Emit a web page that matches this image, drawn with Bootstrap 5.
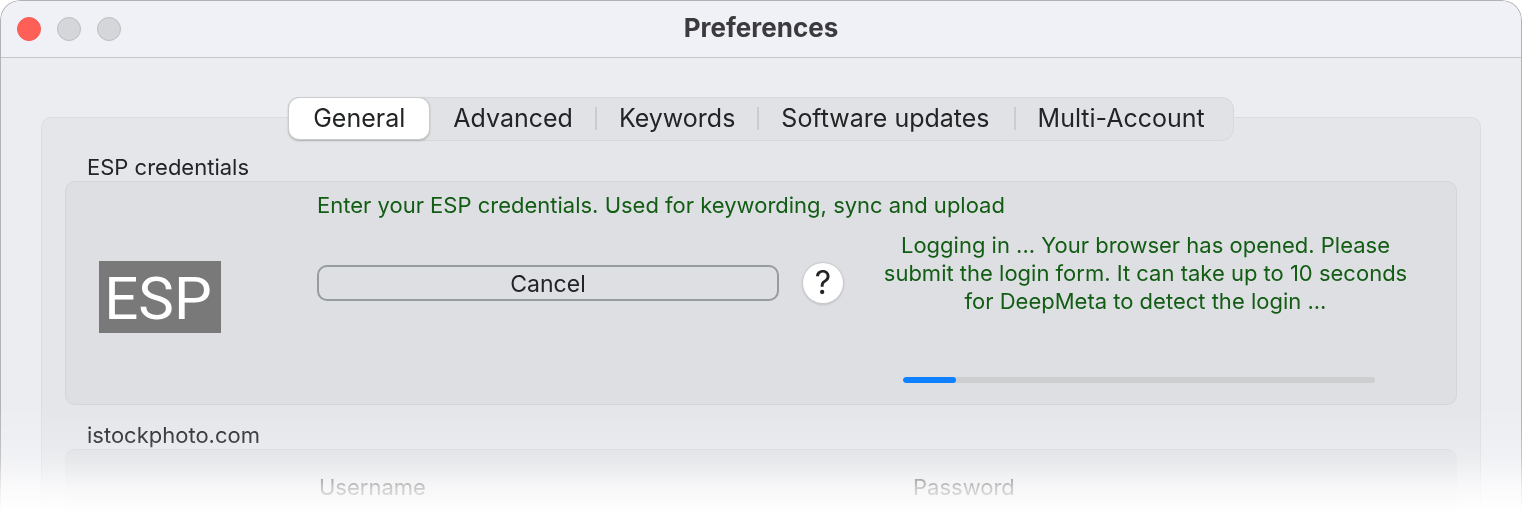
<!DOCTYPE html>
<html lang="en">
<head>
<meta charset="utf-8">
<meta name="viewport" content="width=device-width, initial-scale=1">
<title>Preferences</title>
<link rel="stylesheet" href="https://cdn.jsdelivr.net/npm/bootstrap@5.3.0/dist/css/bootstrap.min.css">
<style>
  body { font-family: Inter, "Liberation Sans", sans-serif; font-size: 22px; line-height: 28px; color: #222425; background: #fff; }
  .pref-window {
    background: #ecedf1; border: 1px solid #b2b2b4; border-bottom: 0; border-radius: 20px 20px 0 0;
    -webkit-mask-image: linear-gradient(to bottom, #000 405px, rgba(0,0,0,.86) 440px, rgba(0,0,0,.74) 458px, rgba(0,0,0,.26) 487px, transparent 512px);
    mask-image: linear-gradient(to bottom, #000 405px, rgba(0,0,0,.86) 440px, rgba(0,0,0,.74) 458px, rgba(0,0,0,.26) 487px, transparent 512px);
  }
  .title-bar { display: grid; grid-template-columns: 1fr auto 1fr; height: 57px; padding: 0 16px; background: #f0f1f6; border-bottom: 1px solid #c5c6ca; border-radius: 20px 20px 0 0; }
  .title-bar h1 { font-size: 26px; line-height: 52px; padding-bottom: 2px; font-weight: 700; color: #3b3b3d; }
  .light { width: 24px; height: 24px; padding: 0; border: 1px solid #bcbec0; border-radius: 50%; background: #d5d6da; }
  .light-close { background: #fe5f57; border-color: #f65b54; }
  .pref-body { padding: 39px 40px 0; }
  .tab-strip { height: 44px; padding-right: 4px; background: #e1e2e5; border: 1px solid #d7d8db; border-radius: 12px; }
  .tab-strip .nav-link { position: relative; height: 41px; padding: 0 22px 2px 24px; border: 0; border-radius: 10px; font-size: 25px; line-height: 38px; color: #222425; background: none; }
  .tab-strip .nav-link.active { padding-right: 24px; color: #222425; background: #fff; box-shadow: 0 0 0 1px #c9cccc, 0 1px 2px 1px rgba(0,0,0,.2); }
  .tab-strip .tab-wide { padding-right: 24px; }
  .divided::before { content: ""; position: absolute; left: 0; top: 9px; width: 2px; height: 23px; background: #cbccd0; }
  .tab-panel { margin-top: -24px; padding: 35px 23px 0; background: #e5e6ea; border: 1px solid #dbdce0; border-bottom: 0; border-radius: 10px 10px 0 0; height: 420px; }
  .group-title { font-size: 22px; line-height: 28px; padding-left: 22px; font-weight: 400; }
  .group-box { background: #dedfe3; border: 1px solid #d4d5d9; border-radius: 10px; }
  .esp-grid { display: grid; grid-template-columns: 194px minmax(0, 526fr) minmax(0, 557fr); column-gap: 24px; padding: 9px 32px 21px 33px; min-height: 224px; }
  .esp-logo { align-self: start; justify-self: start; margin-top: 70px; width: 122px; height: 72px; padding-right: 4px; text-align: center; font-family: Roboto, Inter, sans-serif; font-size: 60px; line-height: 76px; color: #fff; background: #797979; }
  .note { color: #125c14; }
  .hint { white-space: nowrap; }
  .action-row { gap: 24px; margin-top: 44px; }
  .btn-cancel { height: 36px; padding: 0; border: 2px solid #959c9b; border-radius: 10px; font-size: 23px; line-height: 34px; color: #222425; }
  .btn-help { width: 40px; height: 40px; padding: 0; border: 0; border-radius: 50%; background: #fff; box-shadow: 0 0 1px 1px #c9cbcd, 0 1px 2px 1px rgba(0,0,0,.12); font-size: 32px; line-height: 40px; color: #222425; }
  .login-note { margin-top: 40px; }
  .login-progress { height: 6px; margin: 62px 49px 0 36px; background: #cdced0; border-radius: 3px; --bs-progress-bar-bg: #0f80ff; }
  .login-progress .progress-bar { border-radius: 3px; }
  .stock-box { display: grid; grid-template-columns: 594fr 543fr; height: 90px; padding: 23px 1px 0 254px; border-width: 1px 0 0; }
</style>
</head>
<body>
<main class="pref-window">
  <header class="title-bar align-items-center">
    <div class="d-flex gap-3">
      <button class="light light-close" type="button" aria-label="Close"></button>
      <button class="light" type="button" aria-label="Minimize"></button>
      <button class="light" type="button" aria-label="Zoom"></button>
    </div>
    <h1 class="m-0">Preferences</h1>
  </header>
  <div class="pref-body">
    <div class="d-flex justify-content-center position-relative">
      <div class="tab-strip nav flex-nowrap" role="tablist">
        <button class="nav-link active" type="button" role="tab" aria-selected="true">General</button>
        <button class="nav-link" type="button" role="tab">Advanced</button>
        <button class="nav-link divided" type="button" role="tab">Keywords</button>
        <button class="nav-link divided tab-wide" type="button" role="tab">Software updates</button>
        <button class="nav-link divided tab-wide" type="button" role="tab">Multi-Account</button>
      </div>
    </div>
    <div class="tab-panel">
      <h2 class="group-title m-0">ESP credentials</h2>
      <section class="group-box esp-grid">
        <div class="esp-logo">ESP</div>
        <div>
          <p class="note hint m-0">Enter your ESP credentials. Used for keywording, sync and upload</p>
          <div class="action-row d-flex align-items-center">
            <button class="btn btn-cancel flex-grow-1" type="button">Cancel</button>
            <button class="btn-help" type="button" aria-label="Help">?</button>
          </div>
        </div>
        <div class="text-center text-nowrap">
          <p class="note login-note mb-0">Logging in ... Your browser has opened. Please<br>submit the login form. It can take up to 10 seconds<br>for DeepMeta to detect the login ...</p>
          <div class="progress login-progress" role="progressbar" aria-label="Login" aria-valuenow="11" aria-valuemin="0" aria-valuemax="100">
            <div class="progress-bar" style="width:11.2%"></div>
          </div>
        </div>
      </section>
      <h2 class="group-title m-0 pt-3">istockphoto.com</h2>
      <section class="group-box stock-box">
        <div>Username</div>
        <div>Password</div>
      </section>
    </div>
  </div>
</main>
<script src="https://cdn.jsdelivr.net/npm/bootstrap@5.3.0/dist/js/bootstrap.bundle.min.js"></script>
</body>
</html>
